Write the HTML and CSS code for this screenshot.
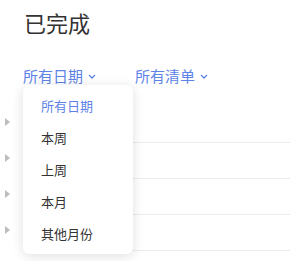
FILE: index.html
```html
<!DOCTYPE html>
<html lang="zh">
<head>
    <meta charset="UTF-8">
    <meta name="viewport" content="width=device-width, initial-scale=1.0">
    <title>已完成</title>
    <link rel="stylesheet" href="styles.css">
</head>
<body>
    <div class="page">
        <h1 class="title">已完成</h1>
        <div class="filters">
            <span class="filter">所有日期<svg class="chev" width="8" height="5" viewBox="0 0 8 5"><path d="M1 1l3 3 3-3" fill="none" stroke="#5e83e6" stroke-width="1.3"/></svg></span>
            <span class="filter">所有清单<svg class="chev" width="8" height="5" viewBox="0 0 8 5"><path d="M1 1l3 3 3-3" fill="none" stroke="#5e83e6" stroke-width="1.3"/></svg></span>
        </div>
        <div class="list">
            <div class="row"><span class="arrow"></span></div>
            <div class="row"><span class="arrow"></span></div>
            <div class="row"><span class="arrow"></span></div>
            <div class="row"><span class="arrow"></span></div>
        </div>

        <div class="menu">
            <div class="item active">所有日期</div>
            <div class="item">本周</div>
            <div class="item">上周</div>
            <div class="item">本月</div>
            <div class="item">其他月份</div>
        </div>
    </div>
</body>
</html>
```

FILE: styles.css
```css
body {
    margin: 0;
    background: #fff;
    font-family: "Noto Sans CJK SC", "Noto Sans", sans-serif;
    color: #333;
}
.page {
    position: relative;
    height: 261px;
    overflow: hidden;
}
.title {
    margin: 0;
    padding: 6px 24px 0;
    font-size: 22px;
    font-weight: 400;
    line-height: 32px;
    color: #333;
}
.filters {
    display: flex;
    gap: 39px;
    padding: 23px 0 0 23px;
    height: 30px;
}
.filter {
    display: flex;
    align-items: center;
    gap: 5px;
    font-size: 15px;
    line-height: 30px;
    color: #5e83e6;
}
.list {
    margin-top: 16px;
}
.row {
    height: 35px;
    border-bottom: 1px solid #ececec;
    margin-left: 24px;
    position: relative;
}
.arrow {
    position: absolute;
    left: -19px;
    top: 11px;
    width: 0;
    height: 0;
    border-left: 5px solid #bdbdbd;
    border-top: 4px solid transparent;
    border-bottom: 4px solid transparent;
}
.menu {
    position: absolute;
    left: 23px;
    top: 85px;
    width: 110px;
    padding: 5px 0 4px;
    background: #fff;
    border-radius: 6px;
    box-shadow: 0 2px 12px rgba(0, 0, 0, 0.13);
}
.item {
    height: 32px;
    line-height: 32px;
    padding-left: 18px;
    font-size: 13px;
    color: #333;
}
.item.active {
    color: #5e83e6;
}
```
